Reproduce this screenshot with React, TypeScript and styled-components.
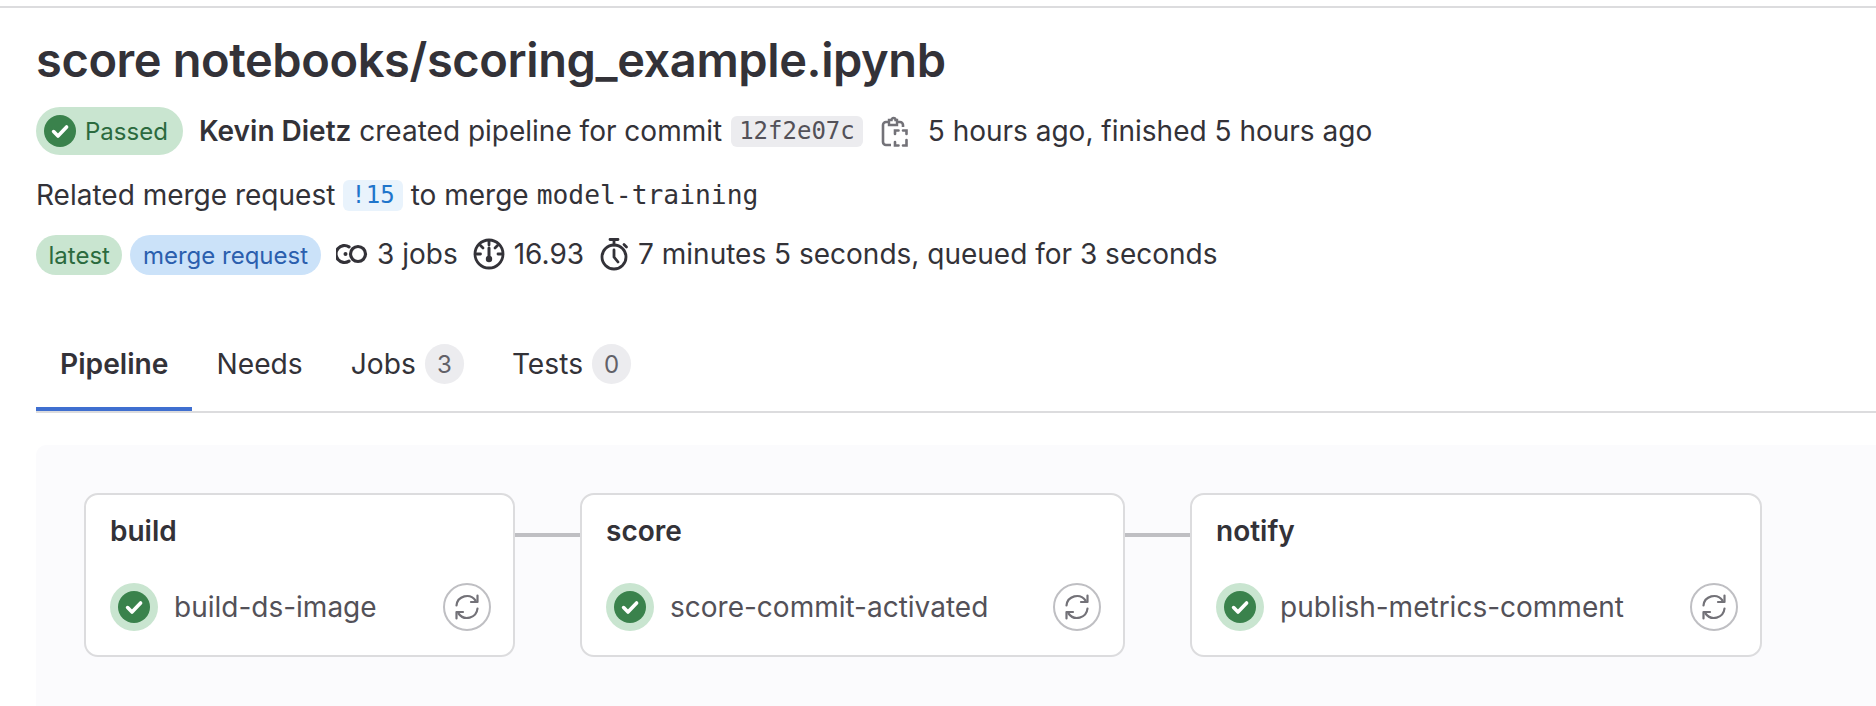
import React from 'react';
import styled, { createGlobalStyle } from 'styled-components';

const GlobalStyle = createGlobalStyle`
	html, body {
		margin: 0;
		padding: 0;
		background: #fff;
		overflow: hidden;
	}
	body {
		font-family: Inter, "Noto Sans", sans-serif;
		color: #333238;
	}
`;

const SuccessIcon = ({ size }: { size: number }) => (
	<svg width={size} height={size} viewBox="0 0 32 32">
		<circle cx="16" cy="16" r="16" fill="#3a824c" />
		<path d="M9.6 16.6l4.4 4.4 8.6-9" fill="none" stroke="#fff" strokeWidth="3.6" strokeLinecap="round" strokeLinejoin="round" />
	</svg>
);

const CopyIcon = () => (
	<svg width="28" height="34" viewBox="0 0 28 34" fill="none" stroke="#737278" strokeWidth="2.6">
		<path d="M7 7H5a3 3 0 0 0-3 3v17a3 3 0 0 0 3 3h5" />
		<path d="M17 7h2a3 3 0 0 1 3 3v2" />
		<path d="M8 5h2.500a2 2 0 0 1 4 0H16v5H8z" strokeWidth="2.4" />
		<path d="M14 19v-3.500h3.500M22 15.500h3.500V19M25.500 25v5.500h-3.500M17.500 30.500H14V27" strokeLinecap="round" />
	</svg>
);

const JobsIcon = () => (
	<svg width="32" height="22" viewBox="0 0 32 22" fill="none" stroke="#333238" strokeWidth="3.2">
		<circle cx="22" cy="11" r="7.500" />
		<path d="M13 3.800a8.500 8.500 0 1 0 0 14.400" strokeLinecap="round" />
		<circle cx="9.500" cy="11" r="2" fill="#333238" stroke="none" />
	</svg>
);

const GaugeIcon = () => (
	<svg width="32" height="32" viewBox="0 0 32 32" fill="none" stroke="#333238" strokeWidth="2.8">
		<circle cx="16" cy="16" r="14" />
		<path d="M16 3v4M4 16h3.500M25 16h3.500M7.500 7.500l2.500 2.500M24.500 7.500L22 10" strokeLinecap="round" />
		<path d="M16 10v9" strokeWidth="3" strokeLinecap="round" />
		<circle cx="16" cy="21" r="3.200" fill="#333238" stroke="none" />
	</svg>
);

const TimerIcon = () => (
	<svg width="30" height="34" viewBox="0 0 30 34" fill="none" stroke="#333238" strokeWidth="2.8" strokeLinecap="round">
		<circle cx="15" cy="20" r="12" />
		<path d="M11 2.500h8M15 3v5M25 7.500l2.500 2.500" />
		<path d="M15 13v7l4 5" />
	</svg>
);

const RetryIcon = () => (
	<svg width="26" height="26" viewBox="0 0 26 26" fill="none" stroke="#737278" strokeWidth="2.2" strokeLinecap="round" strokeLinejoin="round">
		<path d="M2.500 11.500A10.500 10.500 0 0 1 21.500 6.500" />
		<path d="M23.500 1.500v6.500h-6.500" />
		<path d="M23.500 14.500A10.500 10.500 0 0 1 4.500 19.500" />
		<path d="M2.500 24.500V18h6.500" />
	</svg>
);

const stages = [
	{ name: 'build', job: 'build-ds-image', width: 431 },
	{ name: 'score', job: 'score-commit-activated', width: 545 },
	{ name: 'notify', job: 'publish-metrics-comment', width: 572 },
];

const App = () => (
	<Page>
		<GlobalStyle />
		<TopRule />
		<Content>
			<Title>score notebooks/scoring_example.ipynb</Title>
			<StatusRow>
				<PassedBadge>
					<SuccessIcon size={32} />
					Passed
				</PassedBadge>
				<Sentence>
					<strong>Kevin Dietz</strong> created pipeline for commit
				</Sentence>
				<CommitSha>12f2e07c</CommitSha>
				<CopyButton>
					<CopyIcon />
				</CopyButton>
				<Sentence>5 hours ago, finished 5 hours ago</Sentence>
			</StatusRow>
			<MergeRow>
				<Sentence>Related merge request</Sentence>
				<MrLink>!15</MrLink>
				<Sentence>to merge</Sentence>
				<BranchName>model-training</BranchName>
			</MergeRow>
			<MetaRow>
				<Pill $tone="green">latest</Pill>
				<Pill $tone="blue">merge request</Pill>
				<MetaItem>
					<JobsIcon />
					3 jobs
				</MetaItem>
				<MetaItem>
					<GaugeIcon />
					16.93
				</MetaItem>
				<MetaItem>
					<TimerIcon />
					7 minutes 5 seconds, queued for 3 seconds
				</MetaItem>
			</MetaRow>
			<Tabs>
				<Tab $active>Pipeline</Tab>
				<Tab>Needs</Tab>
				<Tab>
					Jobs <Count>3</Count>
				</Tab>
				<Tab>
					Tests <Count>0</Count>
				</Tab>
			</Tabs>
			<GraphPanel>
				{stages.map((stage, i) => (
					<React.Fragment key={stage.name}>
						{i > 0 && <Connector />}
						<StageCard style={{ width: stage.width }}>
							<StageName>{stage.name}</StageName>
							<JobRow>
								<JobStatus>
									<SuccessIcon size={32} />
								</JobStatus>
								<JobName>{stage.job}</JobName>
								<RetryButton>
									<RetryIcon />
								</RetryButton>
							</JobRow>
						</StageCard>
					</React.Fragment>
				))}
			</GraphPanel>
		</Content>
	</Page>
);

const Page = styled.div`
	height: 706px;
	padding-top: 6px;
	box-sizing: border-box;
	display: flex;
	flex-direction: column;
	overflow: hidden;
`;

const TopRule = styled.div`
	height: 2px;
	background: #dcdcde;
	flex-shrink: 0;
`;

const Content = styled.div`
	flex: 1;
	display: flex;
	flex-direction: column;
	padding-left: 36px;
`;

const Title = styled.h1`
	margin: 0;
	padding-top: 22px;
	font-size: 47px;
	line-height: 60px;
	font-weight: 600;
	letter-spacing: -0.4px;
	white-space: nowrap;
`;

const StatusRow = styled.div`
	display: flex;
	align-items: center;
	height: 48px;
	margin-top: 17px;
`;

const PassedBadge = styled.span`
	display: inline-flex;
	align-items: center;
	gap: 9px;
	box-sizing: border-box;
	width: 147px;
	height: 48px;
	padding-left: 8px;
	border-radius: 24px;
	background: #c9e5d0;
	color: #2b6a3e;
	font-size: 24px;
	margin-right: 16px;
`;

const Sentence = styled.span`
	font-size: 28px;
	white-space: pre;
	strong {
		font-weight: 600;
	}
`;

const CommitSha = styled.code`
	margin-left: 9px;
	padding: 0 8px;
	height: 31px;
	line-height: 31px;
	border-radius: 6px;
	background: #ececef;
	color: #535158;
	font-family: "DejaVu Sans Mono", "Liberation Mono", monospace;
	font-size: 24px;
`;

const CopyButton = styled.span`
	display: inline-flex;
	margin: 2px 19px 0 18px;
`;

const MergeRow = styled.div`
	display: flex;
	align-items: center;
	gap: 8px;
	height: 32px;
	margin-top: 24px;
`;

const MrLink = styled.code`
	padding: 0 8px;
	height: 31px;
	line-height: 31px;
	border-radius: 6px;
	background: #e9f3fc;
	color: #1f75cb;
	font-family: "DejaVu Sans Mono", "Liberation Mono", monospace;
	font-size: 24px;
`;

const BranchName = styled.code`
	color: #333238;
	font-family: "DejaVu Sans Mono", "Liberation Mono", monospace;
	font-size: 26.300px;
`;

const MetaRow = styled.div`
	display: flex;
	align-items: center;
	height: 40px;
	margin-top: 24px;
`;

const Pill = styled.span<{ $tone: 'green' | 'blue' }>`
	display: inline-flex;
	align-items: center;
	height: 40px;
	padding: 0 12.500px;
	margin-right: 8px;
	border-radius: 20px;
	font-size: 24px;
	background: ${p => (p.$tone === 'green' ? '#c9e5d0' : '#cbe2f9')};
	color: ${p => (p.$tone === 'green' ? '#2b6a3e' : '#2b5fae')};
`;

const MetaItem = styled.span`
	display: inline-flex;
	align-items: center;
	gap: 9px;
	margin-left: 7.500px;
	margin-right: 7.500px;
	padding-bottom: 2px;
	font-size: 28px;
	line-height: 34px;
	white-space: nowrap;
`;

const Tabs = styled.div`
	display: flex;
	height: 74px;
	margin-top: 62px;
	align-items: stretch;
	border-bottom: 2px solid #dcdcde;
`;

const Tab = styled.div<{ $active?: boolean }>`
	display: flex;
	align-items: center;
	gap: 9px;
	box-sizing: border-box;
	padding: 0 24px 16px;
	font-size: 28.200px;
	font-weight: ${p => (p.$active ? 600 : 400)};
	border-bottom: 4px solid ${p => (p.$active ? '#3f6fd0' : 'transparent')};
`;

const Count = styled.span`
	display: inline-flex;
	align-items: center;
	justify-content: center;
	width: 39px;
	height: 40px;
	border-radius: 20px;
	background: #ececef;
	color: #626168;
	font-size: 24px;
`;

const GraphPanel = styled.div`
	flex: 1;
	display: flex;
	align-items: flex-start;
	margin-top: 32px;
	padding: 48px 0 0 48px;
	background: #fbfbfd;
	border-top-left-radius: 10px;
`;

const StageCard = styled.div`
	box-sizing: border-box;
	height: 164px;
	padding: 18px 22px 0 24px;
	background: #fff;
	border: 2px solid #dcdcde;
	border-radius: 14px;
	flex-shrink: 0;
`;

const Connector = styled.div`
	width: 65px;
	height: 4px;
	margin-top: 40px;
	background: #bfbfc3;
	flex-shrink: 0;
`;

const StageName = styled.div`
	font-size: 28px;
	font-weight: 600;
	line-height: 36px;
`;

const JobRow = styled.div`
	display: flex;
	align-items: center;
	margin-top: 34px;
`;

const JobStatus = styled.span`
	display: flex;
	align-items: center;
	justify-content: center;
	width: 48px;
	height: 48px;
	border-radius: 50%;
	background: #c9e5d0;
`;

const JobName = styled.span`
	flex: 1;
	margin-left: 16px;
	font-size: 28px;
	color: #535158;
`;

const RetryButton = styled.span`
	display: flex;
	align-items: center;
	justify-content: center;
	box-sizing: border-box;
	width: 48px;
	height: 48px;
	border: 2px solid #bfbfc3;
	border-radius: 50%;
`;

export default App;
